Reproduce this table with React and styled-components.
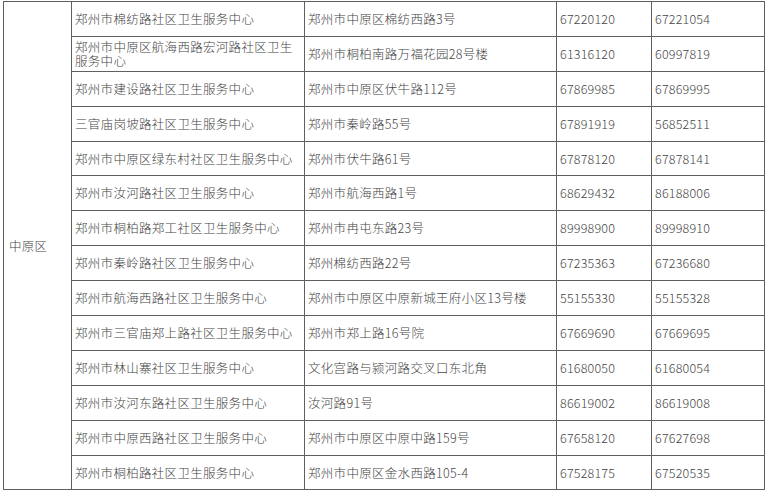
import React from "react";
import styled, { createGlobalStyle } from "styled-components";

const GlobalStyle = createGlobalStyle`
  html, body {
    margin: 0;
    padding: 0;
    background: #ffffff;
  }
  body {
    font-family: "Noto Sans CJK SC", "Liberation Sans", sans-serif;
  }
`;

const Page = styled.div`
  width: 768px;
  height: 496px;
  overflow: hidden;
  padding: 1px 0 0 3px;
  box-sizing: border-box;
`;

const Table = styled.table`
  border-collapse: collapse;
  table-layout: fixed;
  width: 761px;
  color: #444444;
  font-size: 12.5px;
  font-weight: 300;
`;

const Col = styled.col`
  width: ${(p) => p.$w}px;
`;

const Cell = styled.td`
  border: 1px solid #5f5f5f;
  height: 33.9px;
  padding: 0 0 0 3px;
  vertical-align: middle;
  line-height: 14px;
  white-space: ${(p) => (p.$wrap ? "normal" : "nowrap")};
  overflow: hidden;
  letter-spacing: ${(p) => (p.$num ? "0.2px" : "0.3px")};
`;

const DistrictCell = styled(Cell)`
  padding-left: 5px;
`;

const widths = [68, 233, 252, 95, 113];

const rows = [
  ["郑州市棉纺路社区卫生服务中心", "郑州市中原区棉纺西路3号", "67220120", "67221054"],
  ["郑州市中原区航海西路宏河路社区卫生服务中心", "郑州市桐柏南路万福花园28号楼", "61316120", "60997819"],
  ["郑州市建设路社区卫生服务中心", "郑州市中原区伏牛路112号", "67869985", "67869995"],
  ["三官庙岗坡路社区卫生服务中心", "郑州市秦岭路55号", "67891919", "56852511"],
  ["郑州市中原区绿东村社区卫生服务中心", "郑州市伏牛路61号", "67878120", "67878141"],
  ["郑州市汝河路社区卫生服务中心", "郑州市航海西路1号", "68629432", "86188006"],
  ["郑州市桐柏路郑工社区卫生服务中心", "郑州市冉屯东路23号", "89998900", "89998910"],
  ["郑州市秦岭路社区卫生服务中心", "郑州棉纺西路22号", "67235363", "67236680"],
  ["郑州市航海西路社区卫生服务中心", "郑州市中原区中原新城王府小区13号楼", "55155330", "55155328"],
  ["郑州市三官庙郑上路社区卫生服务中心", "郑州市郑上路16号院", "67669690", "67669695"],
  ["郑州市林山寨社区卫生服务中心", "文化宫路与颍河路交叉口东北角", "61680050", "61680054"],
  ["郑州市汝河东路社区卫生服务中心", "汝河路91号", "86619002", "86619008"],
  ["郑州市中原西路社区卫生服务中心", "郑州市中原区中原中路159号", "67658120", "67627698"],
  ["郑州市桐柏路社区卫生服务中心", "郑州市中原区金水西路105-4", "67528175", "67520535"],
];

export default function App() {
  return (
    <Page>
      <GlobalStyle />
      <Table>
        <colgroup>
          {widths.map((w, i) => (
            <Col key={i} $w={w} />
          ))}
        </colgroup>
        <tbody>
          {rows.map((r, i) => (
            <tr key={i}>
              {i === 0 && <DistrictCell rowSpan={rows.length}>中原区</DistrictCell>}
              <Cell $wrap>{r[0]}</Cell>
              <Cell>{r[1]}</Cell>
              <Cell $num>{r[2]}</Cell>
              <Cell $num>{r[3]}</Cell>
            </tr>
          ))}
        </tbody>
      </Table>
    </Page>
  );
}
